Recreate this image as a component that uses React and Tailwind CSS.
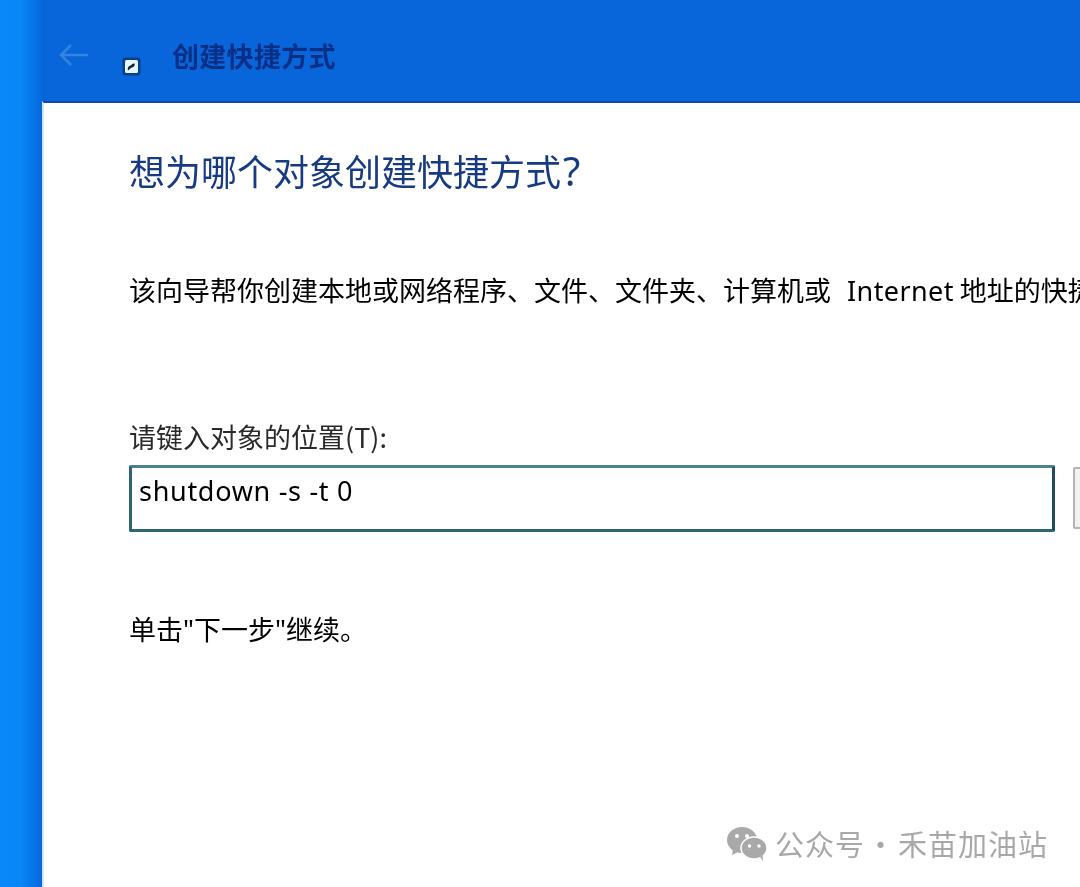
import React from 'react';

const cjk = { fontFamily: '"Noto Sans CJK SC", "Noto Sans", sans-serif' };
const latin = { fontFamily: '"Noto Sans", sans-serif' };

function ShortcutBadge() {
  return (
    <svg width="19" height="19" viewBox="0 0 19 19" className="mt-[12px]">
      <rect x="0.5" y="0.5" width="18" height="18" rx="3" fill="#0b3f86" />
      <rect x="3" y="3" width="13" height="13" rx="1.500" fill="#e8f6ff" />
      <path d="M6 13.500c-.8-2.800.8-5 3.300-5.300.4-1.200 1.600-2 3.200-1.700.6 1.600-.2 3.200-1.700 3.700-1.400.3-2.600 1.200-4.800 3.300z" fill="#12233f" />
    </svg>
  );
}

function WechatMark() {
  return (
    <svg width="40" height="34" viewBox="0 0 40 34" fill="#a9a9a9" className="mt-[3px]">
      <ellipse cx="15" cy="13" rx="15" ry="13" />
      <path d="M6 21l-1 7 8-4z" />
      <ellipse cx="27" cy="21" rx="13" ry="11" stroke="#fff" strokeWidth="1.500" />
      <path d="M33 30l3 4-.5-6z" />
      <circle cx="10" cy="9" r="2" fill="#fff" />
      <circle cx="20" cy="9" r="2" fill="#fff" />
      <circle cx="22.500" cy="19" r="1.700" fill="#fff" />
      <circle cx="32" cy="19" r="1.700" fill="#fff" />
    </svg>
  );
}

export default function App() {
  return (
    <div className="relative flex h-[887px] w-[1080px] overflow-hidden bg-[#0868dc] blur-[0.5px]" style={cjk}>
      {/* desktop strip on the left */}
      <div className="w-[42px] shrink-0 bg-gradient-to-r from-[#0888fa] via-[#0886f6] to-[#0668dc]" />

      <div className="flex min-w-0 flex-1 flex-col">
        {/* wizard title bar */}
        <div className="flex h-[101px] shrink-0 items-start bg-[#0866da]">
          <svg width="30" height="24" viewBox="0 0 30 24" fill="none" stroke="#3185de" strokeWidth="2.500" className="ml-[17px] mt-[43px]">
            <path d="M29 12H2M12 2 2 12l10 10" />
          </svg>
          <div className="ml-[33px] mt-[45px]">
            <ShortcutBadge />
          </div>
          <span className="ml-[31px] mt-[37px] whitespace-nowrap text-[27px] font-semibold leading-[38px] tracking-[0.3px] text-[#0a2f86]">创建快捷方式</span>
        </div>

        {/* wizard body */}
        <div className="flex min-h-0 flex-1 flex-col overflow-hidden border-l-2 border-t-2 border-l-[#cfe4fb] border-t-[#0a4aa8] bg-white pl-[85px]">
          <h1 className="mt-[42px] whitespace-nowrap text-[36px] font-normal leading-[50px] text-[#173a82]">
            想为哪个对象创建快捷方式<span className="ml-[2px] text-[40px]" style={latin}>?</span>
          </h1>
          <p className="mt-[75px] whitespace-nowrap text-[27px] leading-[38px] text-black">
            该向导帮你创建本地或网络程序、文件、文件夹、计算机或
            <span className="ml-[16px] mr-[6px] tracking-[0.4px]" style={latin}>Internet</span>
            地址的快捷方式。
          </p>
          <label className="mt-[108px] whitespace-nowrap text-[27px] leading-[38px] text-[#2a2a2a]">请键入对象的位置(T):</label>
          <div className="mt-[9px] flex items-start gap-[18px]">
            <div className="h-[67px] w-[926px] shrink-0 rounded-[2px] border-[3px] border-[#2f6478] border-r-[#1f4a6a] border-t-[#4a8494] pl-[7px] pt-[4px] text-[27px] leading-[38px] tracking-[0.7px] text-black" style={latin}>
              shutdown -s -t 0
            </div>
            <div className="mt-[2px] h-[62px] w-[40px] shrink-0 rounded-[2px] border-2 border-[#b4b4b4] bg-[#f2f2f2]" />
          </div>
          <p className="mt-[78px] whitespace-nowrap text-[27px] leading-[38px] text-black">
            单击<span style={latin}>"</span>下一步<span style={latin}>"</span>继续。
          </p>
        </div>
      </div>

      {/* watermark */}
      <div className="absolute left-[727px] top-[824px] flex items-center text-[29px] leading-[36px] text-[#a8a8a8]">
        <WechatMark />
        <span className="ml-[8px] whitespace-nowrap tracking-[1px]">公众号</span>
        <span className="ml-[1px] whitespace-nowrap">·</span>
        <span className="ml-[3px] whitespace-nowrap tracking-[1px]">禾苗加油站</span>
      </div>
    </div>
  );
}
